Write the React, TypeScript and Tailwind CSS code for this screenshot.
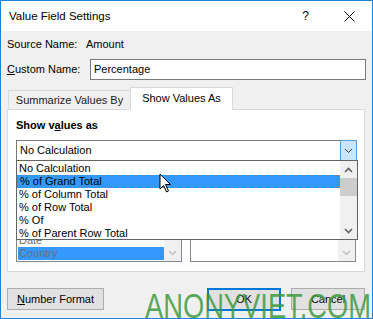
const ROWS = [
  "No Calculation",
  "% of Grand Total",
  "% of Column Total",
  "% of Row Total",
  "% Of",
  "% of Parent Row Total",
];

function Chevron({ up = false, color = "#404040", w = 1 }: { up?: boolean; color?: string; w?: number }) {
  return (
    <svg width="9" height="6" viewBox="0 0 9 6">
      <path
        d={up ? "M1 5 L4.5 1.5 L8 5" : "M1 1 L4.5 4.5 L8 1"}
        fill="none"
        stroke={color}
        strokeWidth={w}
      />
    </svg>
  );
}

export default function App() {
  return (
    <div className="relative h-[319px] w-[373px] overflow-hidden border border-[#1883d7] bg-[#f0f0f0] font-['Liberation_Sans',Arial,sans-serif] text-[11px] leading-[13px] text-black">
      {/* Title bar */}
      <div className="flex h-[30px] items-center bg-white pl-[8px]">
        <span className="text-[11.5px]">Value Field Settings</span>
        <span className="ml-auto mr-[35px] text-[12px]">?</span>
        <svg width="11" height="11" viewBox="0 0 11 11" className="mr-[17px]">
          <path d="M0.5 0.5 L10.5 10.5 M10.5 0.5 L0.5 10.5" stroke="#000" strokeWidth="1" />
        </svg>
      </div>

      <div className="px-[6px] pt-[7px]">
        <div className="flex h-[13px] items-center">
          <span className="w-[79px]">Source Name:</span>
          <span>Amount</span>
        </div>

        <div className="mt-[8px] flex h-[21px] items-center">
          <span className="w-[83px]">
            <span className="underline">C</span>ustom Name:
          </span>
          <div className="flex h-[21px] w-[276px] items-center border border-[#7a7a7a] bg-white px-[3px]">
            Percentage
          </div>
        </div>

        {/* Tabs */}
        <div className="mt-[7px] flex h-[22px] items-end pl-[1px]">
          <div className="flex h-[19px] w-[122px] items-center justify-center border-l border-t border-[#d9d9d9] text-[#1a1a1a]">
            Summarize Values By
          </div>
          <div className="relative z-10 -mb-px flex h-[23px] w-[103px] items-center justify-center border-x border-t border-[#d9d9d9] bg-white pb-[2px]">
            Show Values As
          </div>
        </div>

        <div className="relative h-[163px] w-[358px] border border-[#d9d9d9] bg-white px-[8px] pt-[9px]">
          <div className="font-bold">
            Show v<span className="underline">a</span>lues as
          </div>

          <div className="mt-[8px] flex h-[21px] w-[341px] items-center border border-[#7a7a7a] bg-white pl-[3px]">
            <span>No Calculation</span>
            <div className="ml-auto flex h-[21px] w-[17px] -mr-px items-center justify-center border border-[#569de5] bg-[#cce4f7]">
              <Chevron />
            </div>
          </div>

          {/* base field / base item lists, mostly under the open list */}
          <div className="mt-[21px] flex gap-[8px]">
            <div className="flex h-[80px] w-[167px] border border-[#828790] bg-white">
              <div className="flex flex-1 flex-col justify-end pb-[1px] pl-[1px] text-[#6d6d6d]">
                <div className="h-[13px] pl-[1px]">Date</div>
                <div className="h-[13px] bg-[#3399ff] pl-[1px]">Country</div>
              </div>
              <div className="flex w-[17px] flex-col items-center justify-end bg-[#f0f0f0] pb-[5px]">
                <Chevron color="#c0c0c0" w={1.5} />
              </div>
            </div>
            <div className="flex h-[80px] w-[167px] border border-[#828790] bg-white">
              <div className="flex-1" />
              <div className="flex w-[17px] flex-col items-center justify-end bg-[#f0f0f0] pb-[5px]">
                <Chevron color="#c0c0c0" w={1.5} />
              </div>
            </div>
          </div>

          {/* Open dropdown list */}
          <div className="absolute left-[8px] top-[50px] z-20 flex h-[80px] w-[342px] border border-[#646464] bg-white">
            <div className="flex-1 pt-[1px]">
              {ROWS.map((r, i) => (
                <div
                  key={r}
                  className={`h-[13px] pl-[2px] ${
                    i === 1 ? "border border-dotted border-[#d2691e] bg-[#3399ff] pl-[1px] leading-[11px]" : ""
                  }`}
                >
                  {r}
                </div>
              ))}
            </div>
            <div className="flex w-[17px] flex-col items-center bg-[#f0f0f0]">
              <div className="flex h-[17px] items-center justify-center">
                <Chevron up color="#606060" w={1.6} />
              </div>
              <div className="h-[18px] w-[17px] bg-[#cdcdcd]" />
              <div className="mt-auto flex h-[17px] items-center justify-center">
                <Chevron color="#606060" w={1.6} />
              </div>
            </div>
          </div>

          {/* mouse pointer */}
          <svg width="14" height="21" viewBox="0 0 14 21" className="absolute left-[151px] top-[63px] z-30">
            <path
              d="M1 1 L1 16 L4.5 12.5 L7.5 19 L9.5 18 L6.5 11.5 L11.5 11.5 Z"
              fill="#fff"
              stroke="#000"
              strokeWidth="1"
              strokeLinejoin="round"
            />
          </svg>
        </div>

        {/* Buttons */}
        <div className="mt-[16px] flex items-start">
          <div className="flex h-[22px] w-[97px] items-center justify-center border border-[#adadad] bg-[#e1e1e1]">
            <span className="underline">N</span>umber Format
          </div>
          <div className="ml-auto flex h-[23px] w-[74px] items-center justify-center border-2 border-[#0078d7] bg-[#e1e1e1]">
            OK
          </div>
          <div className="ml-[10px] mr-[1px] flex h-[22px] w-[74px] items-center justify-center border border-[#adadad] bg-[#e1e1e1]">
            Cancel
          </div>
        </div>
      </div>

      {/* Watermark */}
      <div className="pointer-events-none absolute left-[144px] top-[287px] z-40 origin-left scale-x-[0.78] whitespace-nowrap font-['Liberation_Sans',Arial,sans-serif] text-[35px] leading-[35px] text-[#3d9a3d]/85">
        ANONYVIET.COM
      </div>
    </div>
  );
}
